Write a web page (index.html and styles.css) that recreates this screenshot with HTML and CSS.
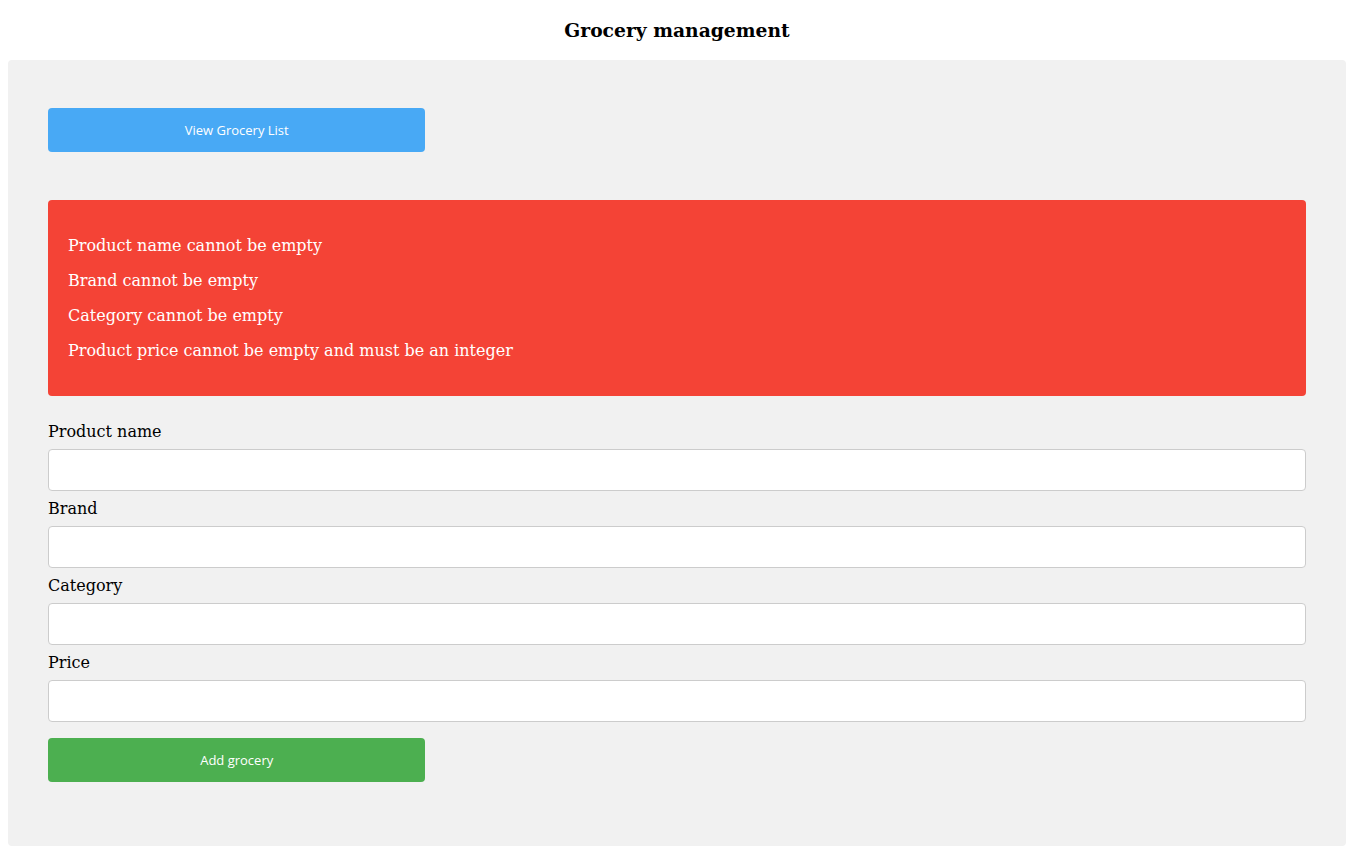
FILE: index.html
```html
<!DOCTYPE html>
<html>
<head>
<meta charset="utf-8">
<title>Grocery management</title>
<link rel="stylesheet" href="styles.css">
</head>
<body>
<h3 class="title">Grocery management</h3>
<div class="panel">
  <button class="btn btn-blue">View Grocery List</button>
  <div class="alert">
    <p>Product name cannot be empty</p>
    <p>Brand cannot be empty</p>
    <p>Category cannot be empty</p>
    <p>Product price cannot be empty and must be an integer</p>
  </div>
  <form class="form">
    <label class="label">Product name</label>
    <input class="input" type="text">
    <label class="label">Brand</label>
    <input class="input" type="text">
    <label class="label">Category</label>
    <input class="input" type="text">
    <label class="label">Price</label>
    <input class="input" type="text">
    <button type="button" class="btn btn-green">Add grocery</button>
  </form>
</div>
</body>
</html>
```
FILE: styles.css
```css
body {
  margin: 0;
  padding: 8px;
  font-family: "DejaVu Serif", serif;
  font-size: 16px;
  color: #000;
  background: #fff;
}
.title {
  font-size: 18.72px;
  font-weight: bold;
  text-align: center;
  margin: 11px 0 19px;
  line-height: 22px;
}
.panel {
  background: #f1f1f1;
  border-radius: 4px;
  padding: 48px 40px 64px;
  height: 674px;
}
.btn {
  display: block;
  width: 30%;
  height: 44px;
  border: none;
  border-radius: 4px;
  color: #fff;
  font-family: "Open Sans", "Noto Sans", sans-serif;
  font-size: 13px;
  cursor: pointer;
  padding: 0;
}
.btn-blue {
  background: #48a9f5;
}
.btn-green {
  background: #4caf50;
  margin-top: 16px;
}
.alert {
  margin-top: 48px;
  background: #f44336;
  color: #fff;
  border-radius: 4px;
  padding: 20px;
}
.alert p {
  margin: 16px 0;
  line-height: 19px;
}
.form {
  margin-top: 26px;
  display: flex;
  flex-direction: column;
}
.label {
  display: block;
  line-height: 19px;
}
.input {
  display: block;
  box-sizing: border-box;
  width: 100%;
  height: 42px;
  margin: 8px 0;
  border: 1px solid #ccc;
  border-radius: 4px;
  background: #fff;
  padding: 12px 20px;
}
.form .input:last-of-type {
  margin-bottom: 0;
}
```
